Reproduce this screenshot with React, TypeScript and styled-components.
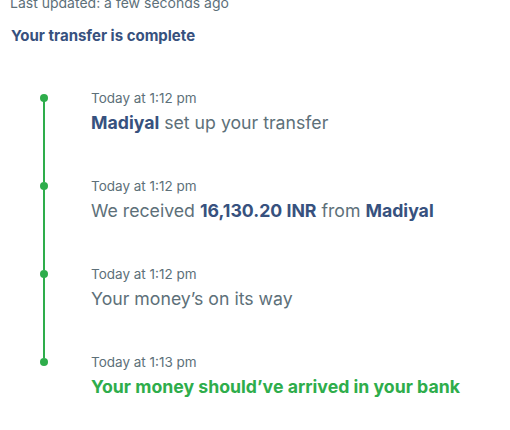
import React from "react";
import styled, { createGlobalStyle } from "styled-components";

const Global = createGlobalStyle`
  html, body { margin: 0; padding: 0; background: #fff; }
  body { font-family: Inter, "Open Sans", sans-serif; }
`;

const Page = styled.div`
  padding: 0 10px;
  margin-top: -7px;
`;

const Updated = styled.div`
  font-size: 14px;
  line-height: 20px;
  color: #5d7079;
`;

const Heading = styled.h2`
  margin: 11px 0 0 1px;
  font-size: 15px;
  line-height: 24px;
  font-weight: 700;
  color: #37517e;
`;

const Timeline = styled.ol`
  list-style: none;
  margin: 40px 0 0;
  padding: 0 0 0 29px;
`;

const Item = styled.li<{ $last?: boolean }>`
  display: grid;
  grid-template-columns: 10px 1fr;
  column-gap: 42px;
  height: ${(p) => (p.$last ? "auto" : "88px")};
`;

const Rail = styled.div`
  display: flex;
  flex-direction: column;
  align-items: center;
  padding-top: 6px;
`;

const Dot = styled.span`
  width: 8px;
  height: 8px;
  border-radius: 50%;
  background: #2ead4b;
  flex: none;
`;

const Line = styled.span`
  width: 2px;
  flex: 1;
  margin-top: -4px;
  margin-bottom: -6px;
  background: #2ead4b;
`;

const Content = styled.div`
  display: flex;
  flex-direction: column;
`;

const When = styled.div`
  font-size: 13.5px;
  line-height: 20px;
  color: #5d7079;
`;

const What = styled.div<{ $done?: boolean }>`
  margin-top: 2px;
  font-size: 17.7px;
  line-height: 26px;
  color: ${(p) => (p.$done ? "#2ead4b" : "#5d7079")};
  font-weight: ${(p) => (p.$done ? 700 : 400)};
  b { font-weight: 700; color: #37517e; }
`;

const events: { when: string; what: React.ReactNode; done?: boolean }[] = [
  { when: "Today at 1:12 pm", what: <><b>Madiyal</b> set up your transfer</> },
  {
    when: "Today at 1:12 pm",
    what: <>We received <b>16,130.20 INR</b> from <b>Madiyal</b></>,
  },
  { when: "Today at 1:12 pm", what: <>Your money’s on its way</> },
  { when: "Today at 1:13 pm", what: <>Your money should’ve arrived in your bank</>, done: true },
];

export default function App() {
  return (
    <>
      <Global />
      <Page>
        <Updated>Last updated: a few seconds ago</Updated>
        <Heading>Your transfer is complete</Heading>
        <Timeline>
          {events.map((e, i) => {
            const last = i === events.length - 1;
            return (
              <Item key={i} $last={last}>
                <Rail>
                  <Dot />
                  {!last && <Line />}
                </Rail>
                <Content>
                  <When>{e.when}</When>
                  <What $done={e.done}>{e.what}</What>
                </Content>
              </Item>
            );
          })}
        </Timeline>
      </Page>
    </>
  );
}
